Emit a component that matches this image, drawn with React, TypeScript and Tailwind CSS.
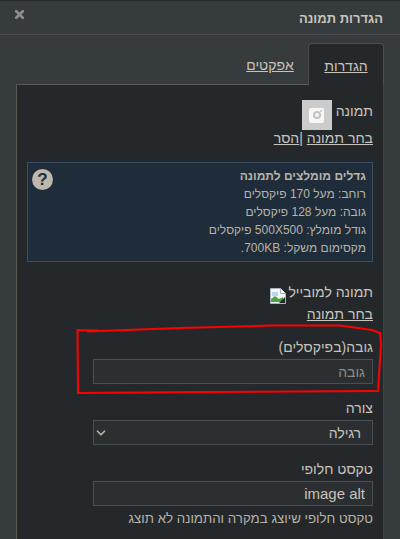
import { X, ChevronDown } from "lucide-react";

const font = { fontFamily: '"Liberation Sans", Arial, sans-serif' };

function BrokenImage() {
  return (
    <svg width="16" height="16" viewBox="0 0 16 16" className="shrink-0">
      <path d="M0.5 0.5H10.5L15.5 5.5V15.5H0.5Z" fill="#f4f6f8" stroke="#a9b4bd" />
      <path d="M10.5 0.5V5.5H15.5" fill="#fff" stroke="#a9b4bd" />
      <path d="M2 4h6v4H2z" fill="#bcd4ee" />
      <path d="M1 14V11L5 8l4 3 4-2v5z" fill="#4ea24a" />
      <path d="M9 15l6-6v6z" fill="#25282b" />
    </svg>
  );
}

function Field({ label, children, note }: { label: string; children: React.ReactNode; note?: string }) {
  return (
    <div className="flex flex-col items-start">
      <label className="text-sm leading-5 text-[#c8c3bc] mb-[2px]">{label}</label>
      {children}
      {note && <p className="text-[13.3px] leading-5 text-[#b8b2a9] mt-[3px] whitespace-nowrap">{note}</p>}
    </div>
  );
}

export default function App() {
  return (
    <div dir="rtl" style={font} className="relative w-[400px] h-[539px] overflow-hidden bg-[#363b3d] border-t border-[#25282a]">
      <div className="h-[34px] flex items-center justify-between pr-[17px] pl-[13px] border-b border-[#4a4a4a]">
        <h4 className="text-[13px] font-bold text-[#c8c3bc] mt-[3px]">הגדרות תמונה</h4>
        <X size={13} strokeWidth={5} className="text-[#8f8f8f] -mt-[7px]" />
      </div>

      <div className="flex pr-[16px] pt-[8px] -mb-px relative z-10 text-sm">
        <a className="w-[76px] h-[42px] flex items-center justify-center bg-[#25282b] border border-b-0 border-[#4a4f52] rounded-t text-[#c8c3bc] underline pt-[2px]">הגדרות</a>
        <a className="w-[76px] h-[41px] flex items-center justify-center text-[#c8c3bc] underline pt-[2px]">אפקטים</a>
      </div>

      <div className="mr-[16px] ml-[16px] h-[460px] bg-[#25282b] border-l border-t border-r border-[#5a5a55] border-r-[#3f4447] px-[10px] pt-[15px]">
        <div className="flex items-center gap-[4px] h-[30px]">
          <span className="text-sm text-[#c8c3bc] pb-[8px]">תמונה</span>
          <div className="w-[30px] h-[30px] bg-[#cccccc] flex items-center justify-center">
            <div className="relative w-[15px] h-[15px] bg-[#f7f7f7] rounded-[2px] flex items-center justify-center">
              <div className="w-[8px] h-[8px] rounded-full border-2 border-[#c4c4c4]" />
              <div className="absolute top-[2px] left-[11px] w-[2px] h-[2px] rounded-full bg-[#c4c4c4]" />
            </div>
          </div>
        </div>
        <div className="text-sm leading-5 text-[#c8c3bc] -mt-[2px]">
          <a className="underline">בחר תמונה</a> |<a className="underline">הסר</a>
        </div>

        <div className="mt-[14px] h-[100px] bg-[#1f2d3a] border border-[#3a4f66] pr-[6px] pl-[4px] pt-[4px] flex justify-between text-xs leading-[18px] text-[#b8b2a9]">
          <div>
            <p className="font-bold">גדלים מומלצים לתמונה</p>
            <p>רוחב: מעל 170 פיקסלים</p>
            <p>גובה: מעל 128 פיקסלים</p>
            <p>גודל מומלץ: 500X500 פיקסלים</p>
            <p>מקסימום משקל: 700KB.</p>
          </div>
          <div className="w-[21px] h-[21px] mt-[2px] rounded-full bg-[#bdb7ae] flex items-center justify-center text-[#1f2d3a] text-[17px] font-bold">?</div>
        </div>

        <div className="mt-[20px] flex items-start gap-[2px] h-[20px] text-sm leading-5 text-[#c8c3bc]">
          <span>תמונה למובייל</span>
          <span className="mt-[6px]"><BrokenImage /></span>
        </div>
        <a className="block mt-[2px] text-sm leading-5 text-[#c8c3bc] underline">בחר תמונה</a>

        <div className="mt-[13px] flex flex-col gap-[14px]">
          <Field label="גובה(בפיקסלים)">
            <input placeholder="גובה" className="w-[280px] h-[25px] bg-[#2b2f32] border border-[#4a4f52] px-[7px] text-sm text-[#c8c3bc] placeholder:text-[#8f8a82] outline-none" />
          </Field>
          <Field label="צורה">
            <div className="w-[280px] h-[25px] bg-[#2b2f32] border border-[#4a4f52] pr-[11px] pl-0 flex items-center justify-between text-sm text-[#c8c3bc]">
              <span>רגילה</span>
              <ChevronDown size={14} strokeWidth={3} className="text-[#b8b2a9]" />
            </div>
          </Field>
          <Field label="טקסט חלופי" note="טקסט חלופי שיוצג במקרה והתמונה לא תוצג">
            <input defaultValue="image alt" className="w-[280px] h-[25px] bg-[#2b2f32] border border-[#4a4f52] px-[7px] text-[15px] text-[#c8c3bc] outline-none" />
          </Field>
        </div>
      </div>

      {/* red marker scribble on top of the screenshot */}
      <svg width="400" height="539" className="absolute top-[-1px] left-0 pointer-events-none">
        <path
          d="M78 330L98 330.5L87 331.5L180 328L270 325.5L340 325.5L372 330L380 333L381 345L378 391L200 392L78 393L77.5 329"
          fill="none"
          stroke="#ff0000"
          strokeWidth="2"
        />
      </svg>
    </div>
  );
}
